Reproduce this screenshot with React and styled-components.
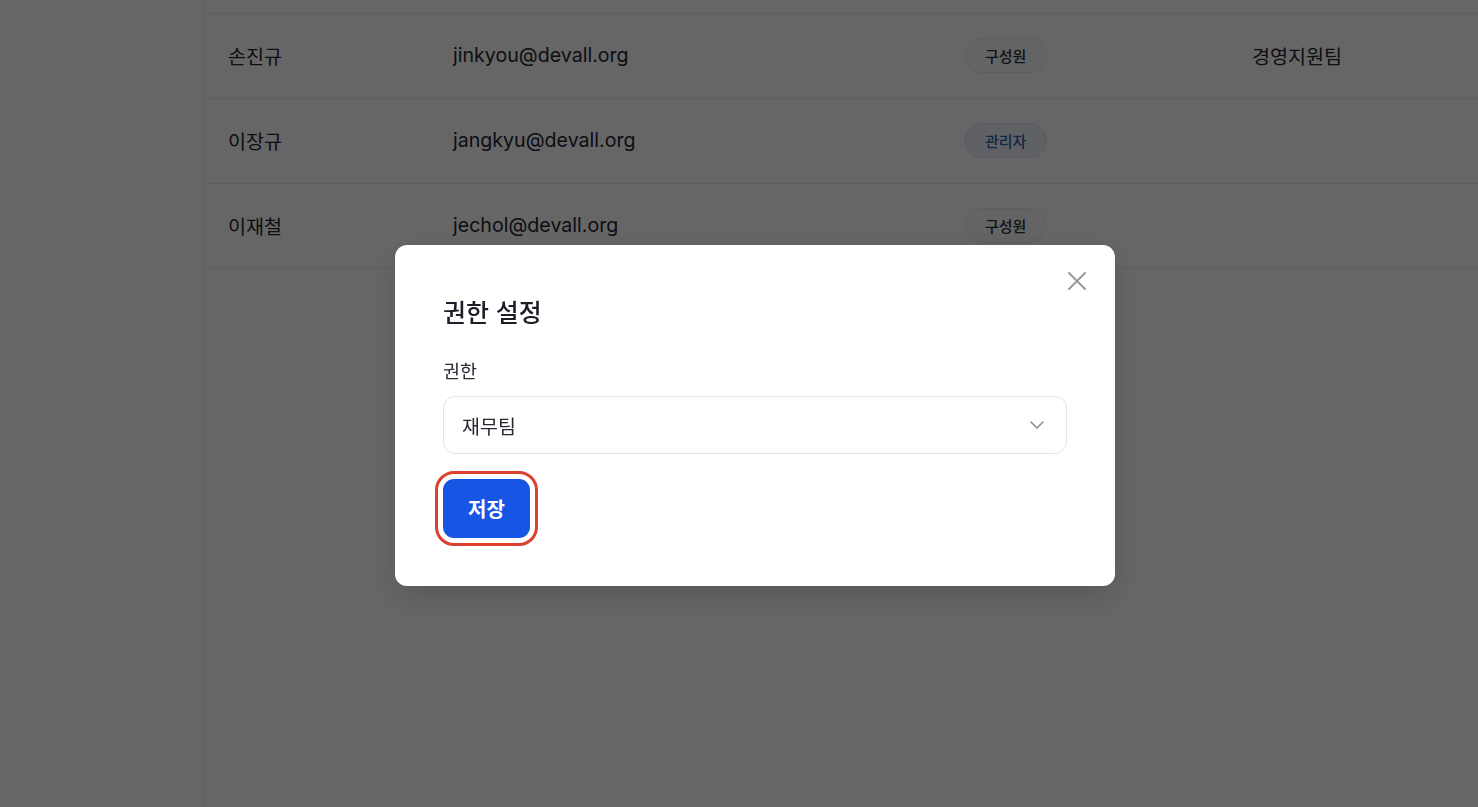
import React from 'react'
import styled, { createGlobalStyle } from 'styled-components'

const GlobalStyle = createGlobalStyle`
  html, body {
    margin: 0;
    padding: 0;
    background: #ffffff;
  }
  body {
    font-family: 'Inter', 'Noto Sans CJK KR', sans-serif;
    color: #1f2430;
    overflow: hidden;
  }
  * {
    box-sizing: border-box;
  }
`

const members = [
  { name: '손진규', email: 'jinkyou@devall.org', role: 'member', team: '경영지원팀' },
  { name: '이장규', email: 'jangkyu@devall.org', role: 'admin', team: '' },
  { name: '이재철', email: 'jechol@devall.org', role: 'member', team: '' },
]

const roleLabel = { member: '구성원', admin: '관리자' }

const Page = styled.div`
  display: flex;
  height: 100vh;
`

const Sidebar = styled.aside`
  width: 204px;
  flex-shrink: 0;
  border-right: 1px solid #ebebeb;
  background: #ffffff;
`

const Main = styled.main`
  flex: 1;
  display: flex;
  flex-direction: column;
`

const TableTop = styled.div`
  height: 14px;
  border-bottom: 1px solid #e8e8e8;
`

const Row = styled.div`
  display: grid;
  grid-template-columns: 225px 511px 288px 1fr;
  align-items: center;
  height: 85px;
  padding-left: 24px;
  padding-bottom: 2px;
  border-bottom: 1px solid #e8e8e8;
  font-size: 19.6px;
  color: #1f2430;
`

const Cell = styled.div`
  white-space: nowrap;
`

const Badge = styled.span`
  display: inline-flex;
  align-items: center;
  height: 35px;
  padding: 0 20px;
  border-radius: 999px;
  font-size: 15px;
  font-weight: 500;
  border: 1px solid ${p => (p.$admin ? '#dfe6f3' : '#ececec')};
  background: ${p => (p.$admin ? '#eef3fb' : '#fafafa')};
  color: ${p => (p.$admin ? '#2f5fae' : '#2a2f3a')};
`

const Overlay = styled.div`
  position: fixed;
  inset: 0;
  background: rgba(0, 0, 0, 0.6);
  display: flex;
  align-items: center;
  justify-content: center;
  padding: 24px 0 0 32px;
`

const Modal = styled.div`
  position: relative;
  width: 720px;
  background: #ffffff;
  border-radius: 12px;
  padding: 52px 48px 48px;
  box-shadow: 0 10px 30px rgba(0, 0, 0, 0.15);
  display: flex;
  flex-direction: column;
`

const CloseButton = styled.button`
  position: absolute;
  top: 26px;
  right: 28px;
  width: 20px;
  height: 20px;
  padding: 0;
  border: none;
  background: none;
  display: flex;
  align-items: center;
  justify-content: center;
  color: #9a9a9a;
  cursor: pointer;
`

const Title = styled.h2`
  margin: 0;
  font-size: 25px;
  line-height: 32px;
  font-weight: 500;
  color: #1c1f27;
`

const Label = styled.label`
  margin-top: 30px;
  font-size: 18.5px;
  line-height: 24px;
  color: #2a2d35;
`

const Select = styled.div`
  margin-top: 13px;
  height: 58px;
  border: 1px solid #e3e3e8;
  border-radius: 12px;
  padding: 0 22px 0 18px;
  display: flex;
  align-items: center;
  justify-content: space-between;
  font-size: 19.5px;
  color: #262931;
`

const Actions = styled.div`
  margin-top: 25px;
  display: flex;
`

const SaveButton = styled.button`
  height: 59px;
  padding: 0 25px;
  border: none;
  border-radius: 11px;
  background: #1756e5;
  color: #ffffff;
  font-family: inherit;
  font-size: 20px;
  font-weight: 700;
  outline: 3px solid #dc4030;
  outline-offset: 5px;
  cursor: pointer;
`

const CloseIcon = () => (
  <svg width='18' height='18' viewBox='0 0 18 18' fill='none'>
    <path d='M1 1L17 17M17 1L1 17' stroke='currentColor' strokeWidth='2' strokeLinecap='round' />
  </svg>
)

const Chevron = () => (
  <svg width='14' height='8' viewBox='0 0 14 8' fill='none'>
    <path d='M1 1L7 7L13 1' stroke='#8a8a8a' strokeWidth='1.5' strokeLinecap='round' strokeLinejoin='round' />
  </svg>
)

const App = () => (
  <>
    <GlobalStyle />
    <Page>
      <Sidebar />
      <Main>
        <TableTop />
        {members.map(m => (
          <Row key={m.email}>
            <Cell>{m.name}</Cell>
            <Cell>{m.email}</Cell>
            <Cell>
              <Badge $admin={m.role === 'admin'}>{roleLabel[m.role]}</Badge>
            </Cell>
            <Cell>{m.team}</Cell>
          </Row>
        ))}
      </Main>
    </Page>
    <Overlay>
      <Modal>
        <CloseButton aria-label='닫기'>
          <CloseIcon />
        </CloseButton>
        <Title>권한 설정</Title>
        <Label>권한</Label>
        <Select>
          <span>재무팀</span>
          <Chevron />
        </Select>
        <Actions>
          <SaveButton>저장</SaveButton>
        </Actions>
      </Modal>
    </Overlay>
  </>
)

export default App
